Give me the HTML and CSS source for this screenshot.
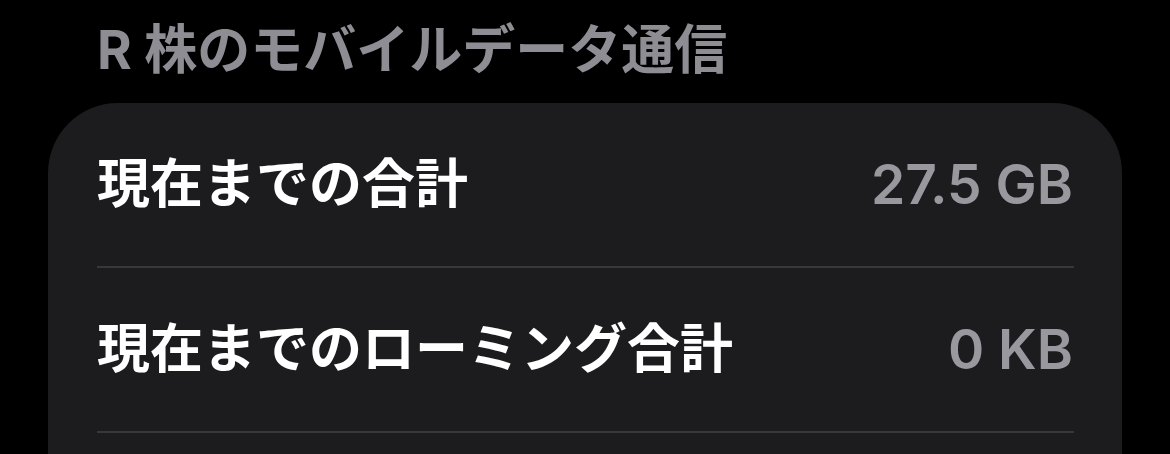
FILE: index.html
```html
<!DOCTYPE html>
<html lang="ja">
<head>
<meta charset="utf-8">
<link rel="stylesheet" href="styles.css">
</head>
<body>
<div class="screen">
  <div class="section-header">R 株のモバイルデータ通信</div>
  <div class="card">
    <div class="row">
      <span class="label">現在までの合計</span>
      <span class="value">27.5 GB</span>
    </div>
    <div class="row">
      <span class="label">現在までのローミング合計</span>
      <span class="value">0 KB</span>
    </div>
    <div class="row"></div>
  </div>
</div>
</body>
</html>
```
FILE: styles.css
```css
html, body {
  margin: 0;
  padding: 0;
  background: #000;
}
.screen {
  width: 1170px;
  height: 454px;
  overflow: hidden;
  font-family: Inter, "Noto Sans CJK JP", sans-serif;
}
.section-header {
  height: 103px;
  box-sizing: border-box;
  padding-left: 97px;
  padding-bottom: 2px;
  display: flex;
  align-items: center;
  color: #8d8d93;
  font-size: 53px;
  font-weight: 700;
  line-height: 1;
}
.card {
  margin-left: 48px;
  width: 1074px;
  box-sizing: border-box;
  padding: 0 48px 0 49px;
  background: #1c1c1e;
  border-radius: 70px 70px 0 0;
  height: 400px;
}
.row {
  height: 165px;
  box-sizing: border-box;
  border-bottom: 2px solid #38383a;
  display: flex;
  align-items: center;
  justify-content: space-between;
  line-height: 1;
}
.label {
  color: #fff;
  font-size: 53px;
  font-weight: 700;
}
.value {
  color: #98989e;
  font-size: 55px;
  font-weight: 600;
  margin-right: 1px;
}
```
